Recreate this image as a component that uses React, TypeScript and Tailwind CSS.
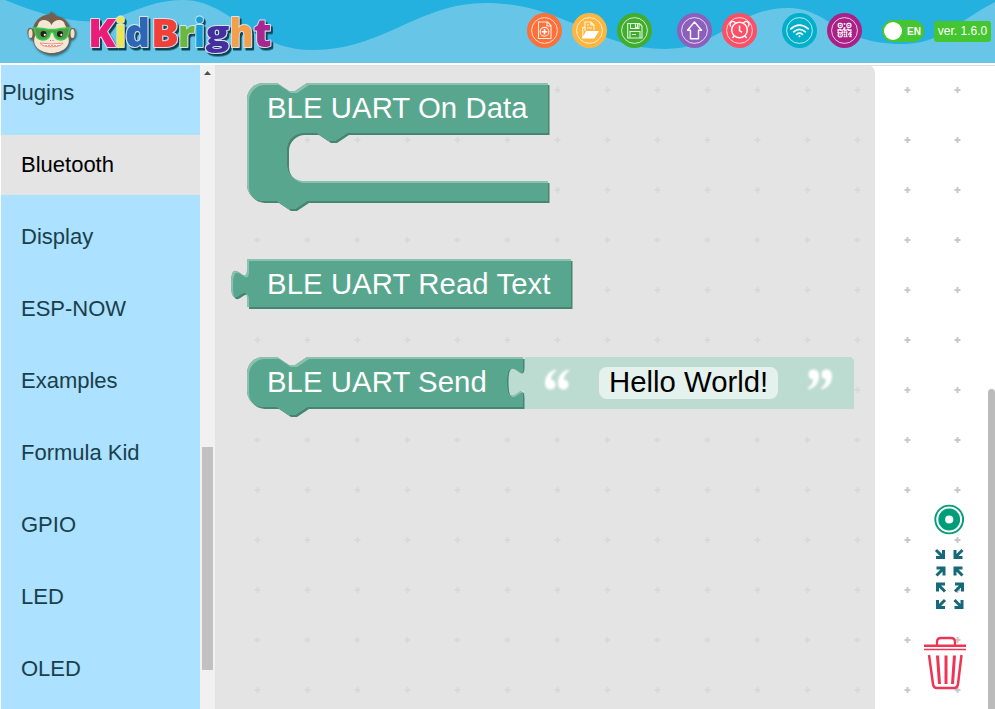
import React from 'react';

const letters = [
  { c: 'K', x: 88, y: 46.5, w: 28, s: 39.5, f: '#ea1f78' },
  { c: 'i', x: 115, y: 46.5, w: 11, s: 38, f: '#ede84a' },
  { c: 'd', x: 125, y: 46.5, w: 25, s: 38, f: '#2f66b6' },
  { c: 'B', x: 151, y: 46.5, w: 28, s: 39.5, f: '#f03f38' },
  { c: 'r', x: 178, y: 46.5, w: 17, s: 37, f: '#6ab83f' },
  { c: 'i', x: 194, y: 46.5, w: 11, s: 38, f: '#14a0d8' },
  { c: 'g', x: 205.5, y: 44.5, w: 24, s: 34, f: '#472da0' },
  { c: 'h', x: 229.5, y: 46.5, w: 24, s: 38, f: '#f2a04b' },
  { c: 't', x: 253.5, y: 46.5, w: 18, s: 39, f: '#a8258f' },
];

function Logo() {
  return (
    <svg className="block h-[63px] w-[290px] shrink-0" viewBox="0 0 290 63">
      <defs>
        <filter id="soft" x="-20%" y="-20%" width="140%" height="140%">
          <feDropShadow dx="1" dy="1.5" stdDeviation="1" floodColor="#123c48" floodOpacity=".75" />
        </filter>
        <filter id="word" x="-10%" y="-20%" width="120%" height="150%">
          <feDropShadow dx="2" dy="2.5" stdDeviation=".6" floodColor="#0d4554" floodOpacity="1" />
        </filter>
      </defs>
      <g filter="url(#soft)">
        <path d="M49 14 Q50 13 52 11 L52 13 L54 13 Q54 15 57 16 Q68 18 70 29 Q76 26 75.500 33 Q75 39 70.500 39 Q68 53 52 54.500 Q35 53 32.500 39 Q28 39 27.500 33 Q27 26 33 29 Q35 17 49 14Z" fill="#765e4e" />
        <ellipse cx="30.500" cy="33.500" rx="2" ry="4.500" fill="#f2dfc9" />
        <ellipse cx="72.500" cy="33.500" rx="2" ry="4.500" fill="#f2dfc9" />
        <path d="M51.500 25 C49 19 39 18 38 25 Q35 29 35 36 C31 47 42 53 51.500 53 C61 53 72 47 68 36 Q68 29 65 25 C64 18 54 19 51.500 25Z" fill="#f5e7d6" />
        <path d="M34 28 Q42 27.500 48 29.500 H55 Q62 27.500 70 28 L69 31 Q68 39.500 61.500 40 Q55 40.500 53.500 33 Q52 31.500 50.500 33 Q49 40.500 42 40 Q35.500 39.500 35 31Z" fill="#529c48" stroke="#35d44b" strokeWidth="1.400" />
        <circle cx="43.500" cy="34" r="3" fill="#16231d" /><circle cx="60" cy="34" r="3" fill="#16231d" />
        <circle cx="44.800" cy="34.800" r="1.100" fill="#fff" /><circle cx="61.300" cy="34.800" r="1.100" fill="#fff" />
        <path d="M40 43 Q51.500 45 63 43 Q61 46.800 51.500 46.800 Q42 46.800 40 43Z" fill="#fff" stroke="#ec7663" strokeWidth=".8" />
        <path d="M42 45.500 H61" stroke="#e99786" strokeDasharray="2 1" />
        <path d="M50.500 40v1M53 40v1" stroke="#c66757" />
      </g>
      <g filter="url(#word)">
        {letters.map((l, i) => (
          <text key={i} x={l.x} y={l.y} fontSize={l.s} textLength={l.w} lengthAdjust="spacingAndGlyphs" fontWeight="800" fill={l.f} stroke="#d5e4f2" strokeWidth="1.800" strokeLinejoin="round" paintOrder="stroke" className="font-['Open_Sans',sans-serif]">{l.c}</text>
        ))}
      </g>
    </svg>
  );
}

function Round({ color, children }: { color: string; children: React.ReactNode }) {
  return (
    <button className={`size-[35px] shrink-0 rounded-full ${color}`}>
      <svg viewBox="0 0 35 35" className="block size-[35px]" fill="none" stroke="#fff" strokeWidth="1.100">
        <circle cx="17.500" cy="17.500" r="12.900" strokeWidth=".9" strokeOpacity=".85" />
        {children}
      </svg>
    </button>
  );
}

const qr = ['0001000', '0000000', '0001000', '1101011', '1011101', '0001011', '0001101'];

function Header() {
  return (
    <header className="relative h-[63px] w-full shrink-0 bg-[#67c6e8]">
      <svg className="absolute inset-0 h-[63px] w-[995px]" viewBox="0 0 995 63">
        <path fill="#24b1df" d="M5 0 C32 11 62 21 91 21.500 C122 22 143 0 183 0 C231 0 249 50 313 50 C382 50 420 3 485 3 C565 3 595 49 665 49 C720 49 735 8 788 8 C829 8 837 44 902 44 C940 44 955 23 995 2 V0Z" />
      </svg>
      <div className="relative flex h-[63px] w-[995px]">
        <Logo />
        <div className="ml-[237px] flex shrink-0 pt-[13px]">
          <div className="flex gap-[10px]">
            <Round color="bg-[#fd7039]">
              <path d="M11.500 9H20.500L24 12.500V25.500H11.500Z M20 9V13H24" strokeOpacity=".85" /><circle cx="17.500" cy="18.800" r="4.400" strokeOpacity=".85" /><path d="M17.500 16v5.600M14.700 18.800h5.600" strokeWidth="1.600" />
            </Round>
            <Round color="bg-[#ffb641]">
              <path d="M13 18V9H19L22 12V17M19 9v3h3M15 12h2M15 15h5M13 14.500H10.800V25" strokeOpacity=".85" /><path d="M14.500 18.500H26L22 25H10.800Z" fill="#fff" />
            </Round>
            <Round color="bg-[#40ad2d]">
              <path d="M10.700 10.500H22.500L25 13V25H10.700Z M13.500 10.500V15.500H22V10.500M18.500 11v3.500h2V11M13 25V18.500H23V25M15 21.500h4" strokeOpacity=".85" />
            </Round>
          </div>
          <div className="ml-[25px] flex gap-[10px]">
            <Round color="bg-[#8d5fbc]">
              <path d="M17.500 9 24.500 17.200H21.500V25.800H13.500V17.200H10.500Z" strokeWidth="1.400" strokeLinejoin="round" />
            </Round>
            <Round color="bg-[#fb5067]">
              <circle cx="17.500" cy="17" r="7.800" strokeWidth="1.500" /><path d="M17.500 12.500v5.200l2.500 1.600M12 23l-1.500 2M23 23l1.500 2" strokeWidth="1.500" /><path d="M9 13.500a2.900 2.900 0 1 1 4.700-3M21.300 10.500a2.900 2.900 0 1 1 4.700 3" strokeWidth="1.400" />
            </Round>
          </div>
          <div className="ml-[25px] flex gap-[10px]">
            <Round color="bg-[#00b0cb]">
              <path d="M8.800 15.800Q17.500 8.600 26.200 15.800M11.700 18.800Q17.500 14 23.300 18.800M14.500 21.400Q17.500 19 20.500 21.400" strokeWidth="1.700" strokeLinecap="round" /><circle cx="17.500" cy="23.200" r="1" fill="#fff" stroke="none" />
            </Round>
            <Round color="bg-[#a92187]">
              <g strokeWidth="1.200">
                <rect x="11.200" y="10.400" width="4" height="4" rx="1.200" /><rect x="19.900" y="10.400" width="4" height="4" rx="1.200" /><rect x="11.200" y="19.900" width="4" height="4" rx="1.200" />
              </g>
              <path d="M12.500 12.400h1.400M21.200 12.400h1.400M12.500 21.900h1.400" />
              {qr.map((r, y) => r.split('').map((v, x) => v === '1' ? <rect key={`${x}-${y}`} x={10.3 + x * 2.1} y={9.9 + y * 2.1} width="1.800" height="1.800" rx=".4" fill="#fff" fillOpacity=".9" stroke="none" /> : null))}
              <path d="M11 17.500l2-1.500 2 1.500 2-1.500 2 1.500 2-1.500 2 1.500M19.500 20v4M22 19.500l2 2-2 2.500" strokeOpacity=".85" />
            </Round>
          </div>
          <div className="mt-[7px] ml-5 flex h-[22px] w-[42px] items-center rounded-full bg-[#45c52f] pl-[2px]">
            <span className="size-[18px] rounded-full bg-white" />
            <span className="ml-[5px] text-[10px] font-bold text-white">EN</span>
          </div>
          <div className="mt-[8px] ml-[10px] flex h-[21px] w-[57px] items-center justify-center rounded-[3px] bg-[#45c52f] pb-px text-[12px] whitespace-nowrap text-white">ver. 1.6.0</div>
        </div>
      </div>
    </header>
  );
}

const items = ['Bluetooth', 'Display', 'ESP-NOW', 'Examples', 'Formula Kid', 'GPIO', 'LED', 'OLED'];

function Toolbox() {
  return (
    <aside className="ml-px flex w-[214px] shrink-0 overflow-hidden text-[22px]">
      <nav className="w-[199px] shrink-0 bg-[#ace1ff] text-[#193f4b]">
        <div className="mb-3 flex h-[58px] items-center pb-1 pl-px">Plugins</div>
        {items.map((name, i) => (
          <div key={name} className={`mb-3 flex h-[60px] items-center pb-[2px] pl-5 ${i === 0 ? 'bg-[#e4e4e4] text-black' : ''}`}>{name}</div>
        ))}
      </nav>
      <div className="flex w-[15px] flex-col items-center bg-[#f1f1f1]">
        <svg className="mt-[6px] h-[4px] w-[7px] shrink-0" viewBox="0 0 7 4"><path d="M0 4 3.500 0 7 4Z" fill="#505050" /></svg>
        <div className="mt-[372px] h-[223px] w-[11px] shrink-0 bg-[#c1c1c1]" />
      </div>
    </aside>
  );
}

const shapes = [
  'M247 99A16 16 0 0 1 263 83H277l12 8h6l12-8H547.500V133H347l-12 8h-6l-12-8H303a16 16 0 0 0-16 16v16a16 16 0 0 0 16 16H547.500V201H307l-12 8h-6l-12-8H263a16 16 0 0 1-16-16Z',
  'M247 259H570.500V307H247V299c0-20-16 16-16-15s16 5 16-15Z',
  'M247 373A16 16 0 0 1 263 357H277l12 8h6l12-8H523V367c0 20-16-16-16 15s16-5 16 15V407H307l-12 8h-6l-12-8H263a16 16 0 0 1-16-16Z',
];

function Block({ d, id }: { d: string; id: string }) {
  return (
    <g>
      <clipPath id={id}><path d={d} /></clipPath>
      <path d={d} fill="#468570" transform="translate(2 2)" />
      <path d={d} fill="#58a68d" />
      <g clipPath={`url(#${id})`}>
        <path d={d} fill="#8cc1af" />
        <path d={d} fill="#58a68d" transform="translate(2 2)" />
      </g>
    </g>
  );
}

const quote = 'M556 369.500C549 371 545 376 545 383C545 387 547 389.500 550.500 389.500C553.500 389.500 555.500 387.500 555.500 384.500C555.500 381.500 553.500 379.800 551 379.800C551 376 553 373 556 371Z';

function Workspace() {
  return (
    <main className="relative h-[644px] w-[780px] shrink-0 overflow-hidden bg-white">
      <svg className="block h-[644px] w-[780px]" viewBox="215 65 780 644">
        <defs>
          <pattern id="grid" x="232.500" y="65" width="50" height="50" patternUnits="userSpaceOnUse">
            <path d="M22 25h6M25 22v6" stroke="#c8c8c8" strokeWidth="2" />
          </pattern>
          <filter id="glow" x="-20%" y="-20%" width="140%" height="140%"><feGaussianBlur stdDeviation=".8" /></filter>
        </defs>
        <rect x="215" y="65" width="780" height="644" fill="url(#grid)" />
        <path d="M215 65.500H995" stroke="#dedede" />
        <path d="M215 65H867a8 8 0 0 1 8 8V709H215Z" fill="#ddd" fillOpacity=".8" />
        {shapes.map((d, i) => <Block key={i} d={d} id={`block-${i}`} />)}
        <path d="M524.500 357H852V359H854V409H524.500V397c0-20-16 16-16-15s16 5 16-15Z" fill="#bcdcd1" />
        <g fill="#fff" filter="url(#glow)">
          <path d={quote} /><path d={quote} transform="translate(13 0)" />
          <path d={quote} transform="rotate(180 688.500 379.500)" /><path d={quote} transform="rotate(180 688.500 379.500) translate(13 0)" />
        </g>
        <rect x="599" y="367" width="179" height="32" rx="8" fill="#e4f1ed" />
        <g fontSize="29.333" fill="#fff">
          <text x="267" y="118" textLength="260.500">BLE UART On Data</text>
          <text x="267" y="294" textLength="283.500">BLE UART Read Text</text>
          <text x="267" y="392" textLength="219.700">BLE UART Send</text>
          <text x="609" y="392" fill="#000">Hello World!</text>
        </g>
        <path d="M988 709V392.500a3.500 3.500 0 0 1 7 0V709Z" fill="#bbb" />
        <g fill="none" stroke="#009e78">
          <circle cx="949.200" cy="519.500" r="13.900" strokeWidth="1.900" />
          <circle cx="949.200" cy="519.500" r="7.500" strokeWidth="6.800" />
        </g>
        <g fill="none" stroke="#176879" strokeWidth="3">
          {[
            [943.5, 557.5, 1, 1], [955, 557.5, -1, 1], [944, 568, 1, -1], [955, 568, -1, -1],
            [937.5, 584, -1, -1], [962.5, 584, 1, -1], [937.5, 607.5, -1, 1], [962, 607.5, 1, 1],
          ].map(([x, y, sx, sy]) => <path key={`${x}-${y}`} transform={`translate(${x} ${y}) scale(${sx} ${sy})`} d="M0-7.500V0H-7.500M-.5-.5-7.500-7.500" />)}
        </g>
        <g fill="none" stroke="#ed3655">
          <path d="M937 645v-3q0-4 4-4h10q4 0 4 4v3" strokeWidth="2.300" />
          <path d="M924 645.700h42" strokeWidth="2.400" /><path d="M924 649.500h42" strokeWidth="1.300" />
          <path d="M929 655 933 684q.5 4 4 4h17q3.500 0 4-4L961.500 655" strokeWidth="2.500" />
          <path d="M937.500 655.500 939.500 684M946 655.500V684M954.500 655.500 952.500 684" strokeWidth="3" />
        </g>
      </svg>
    </main>
  );
}

export default function App() {
  return (
    <div className="flex h-[709px] w-[995px] flex-col overflow-hidden bg-white font-['Liberation_Sans',Arial,sans-serif]">
      <Header />
      <div className="mt-[2px] flex h-[644px] shrink-0"><Toolbox /><Workspace /></div>
    </div>
  );
}
